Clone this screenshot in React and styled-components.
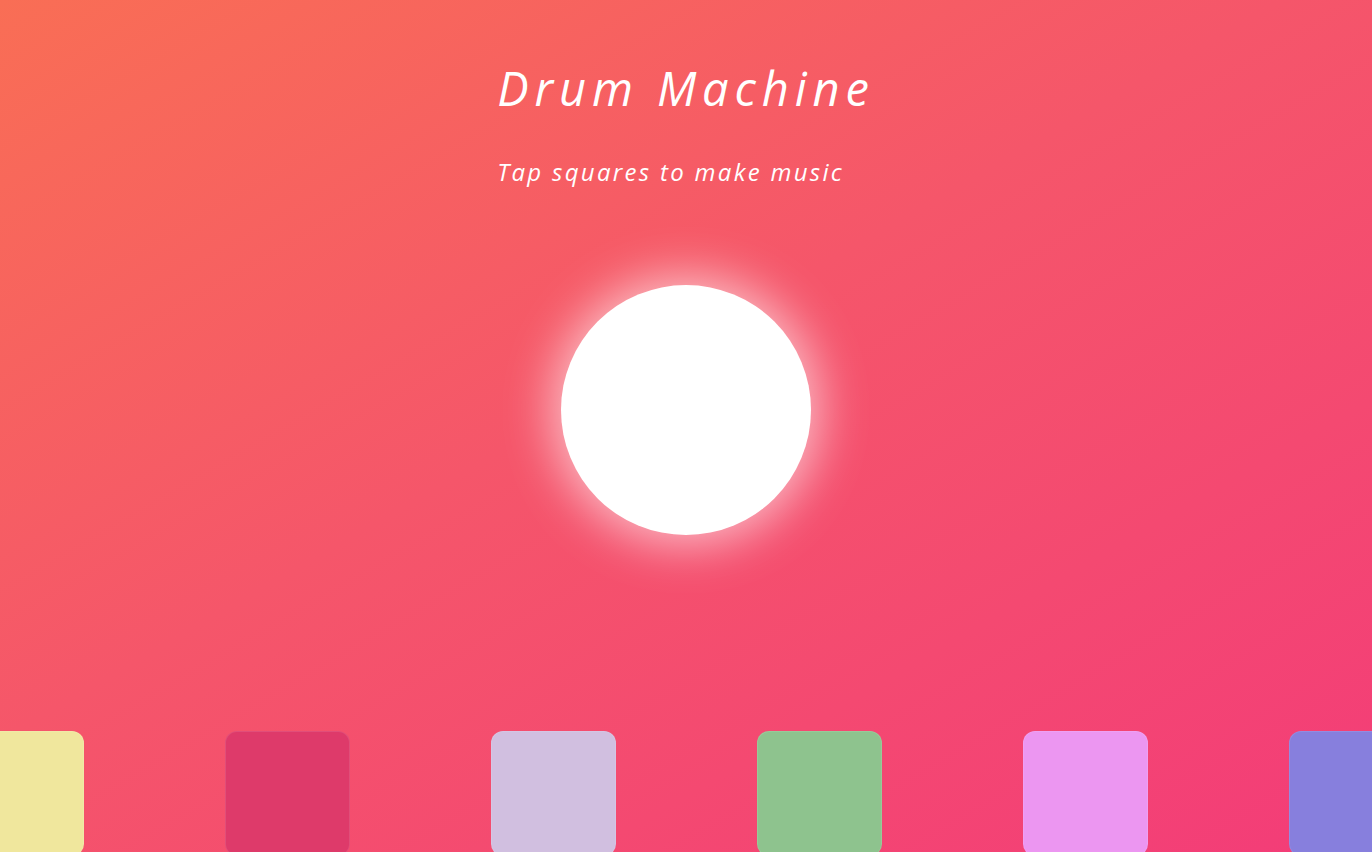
import React from "react";
import styled, { createGlobalStyle } from "styled-components";

const Global = createGlobalStyle`
  html, body { margin: 0; padding: 0; }
  body { overflow: hidden; }
`;

const Page = styled.div`
  width: 100vw;
  height: 852px;
  overflow: hidden;
  background: linear-gradient(150deg, #f96e55 0%, #f5566a 45%, #f33c78 100%);
  display: flex;
  flex-direction: column;
  align-items: center;
  font-family: "Open Sans", "Liberation Sans", sans-serif;
  color: #fff;
`;

const Header = styled.header`
  flex-shrink: 0;
  padding-top: 65px;
  text-align: left;
`;

const Title = styled.h1`
  margin: 0;
  font-size: 47px;
  line-height: 1;
  font-style: italic;
  font-weight: 400;
  letter-spacing: 5.9px;
  white-space: nowrap;
`;

const Subtitle = styled.p`
  margin: 48px 0 0;
  font-size: 24px;
  line-height: 1;
  font-style: italic;
  font-weight: 400;
  letter-spacing: 2.3px;
  white-space: nowrap;
`;

const Orb = styled.div`
  flex-shrink: 0;
  margin-top: 101px;
  width: 250px;
  height: 250px;
  border-radius: 50%;
  background: #fff;
  box-shadow: 0 0 50px 8px rgba(255, 255, 255, 0.65);
`;

const PadRow = styled.div`
  flex-shrink: 0;
  margin-top: 196px;
  width: 100%;
  display: flex;
  justify-content: center;
  gap: 141px;
`;

const Pad = styled.button`
  flex: 0 0 125px;
  width: 125px;
  height: 125px;
  border: 1px solid rgba(255, 255, 255, 0.1);
  border-radius: 12px;
  background: ${(p) => p.$color};
  padding: 0;
  cursor: pointer;
`;

const pads = ["#f0e79d", "#de3a6a", "#d1bfe0", "#8ec38e", "#ec96f1", "#877fdd"];

export default function App() {
  return (
    <>
      <Global />
      <Page>
        <Header>
          <Title>Drum Machine</Title>
          <Subtitle>Tap squares to make music</Subtitle>
        </Header>
        <Orb />
        <PadRow>
          {pads.map((c) => (
            <Pad key={c} $color={c} aria-label="drum pad" />
          ))}
        </PadRow>
      </Page>
    </>
  );
}
